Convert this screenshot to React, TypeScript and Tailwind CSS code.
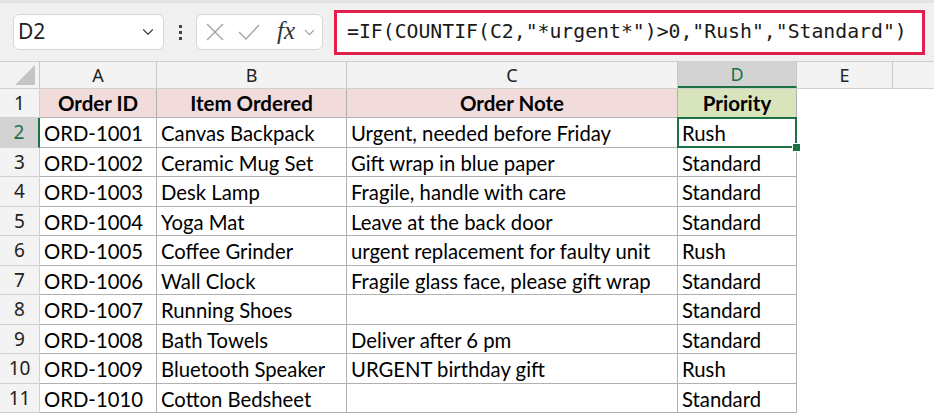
import { ChevronDown } from "lucide-react";

const colClasses = ["w-[117px]", "w-[190px]", "w-[331px]", "w-[119px]"];
const rowHeights = ["h-[29px]", "h-[30px]", "h-[29px]", "h-[30px]", "h-[29px]", "h-[30px]", "h-[29px]", "h-[30px]", "h-[29px]", "h-[30px]", "h-[29px]"];

const orders = [
  ["ORD-1001", "Canvas Backpack", "Urgent, needed before Friday", "Rush"],
  ["ORD-1002", "Ceramic Mug Set", "Gift wrap in blue paper", "Standard"],
  ["ORD-1003", "Desk Lamp", "Fragile, handle with care", "Standard"],
  ["ORD-1004", "Yoga Mat", "Leave at the back door", "Standard"],
  ["ORD-1005", "Coffee Grinder", "urgent replacement for faulty unit", "Rush"],
  ["ORD-1006", "Wall Clock", "Fragile glass face, please gift wrap", "Standard"],
  ["ORD-1007", "Running Shoes", "", "Standard"],
  ["ORD-1008", "Bath Towels", "Deliver after 6 pm", "Standard"],
  ["ORD-1009", "Bluetooth Speaker", "URGENT birthday gift", "Rush"],
  ["ORD-1010", "Cotton Bedsheet", "", "Standard"],
];

const FormulaBar = () => (
  <div className="h-[61px] bg-[#f0f0f0] border-t-[3px] border-[#e2e2e2] flex items-center">
    <div className="ml-[13px] w-[151px] h-[36px] bg-white border border-[#d6d6d6] rounded-[6px] flex items-center justify-between pl-[4px] pr-[6px]">
      <span className="text-[21px] text-[#222] font-['Noto_Sans',sans-serif]">D2</span>
      <ChevronDown className="w-[18px] h-[18px] text-[#444]" strokeWidth={1.6} />
    </div>
    <div className="w-[32px] flex flex-col items-center gap-[3px]">
      <span className="w-[3px] h-[3px] bg-[#444]" />
      <span className="w-[3px] h-[3px] bg-[#444]" />
      <span className="w-[3px] h-[3px] bg-[#444]" />
    </div>
    <div className="w-[127px] h-[36px] bg-white border border-[#d6d6d6] rounded-[6px] flex items-center pl-[8px]">
      <svg width="20" height="20" viewBox="0 0 20 20" className="shrink-0">
        <path d="M2 2 L18 18 M18 2 L2 18" stroke="#a6a6a6" strokeWidth="1.5" fill="none" />
      </svg>
      <svg width="24" height="20" viewBox="0 0 24 20" className="shrink-0 ml-[12px]">
        <path d="M2 10 L9 17 L22 3" stroke="#a6a6a6" strokeWidth="1.5" fill="none" />
      </svg>
      <span className="ml-[16px] text-[25px] italic text-[#333] font-['Liberation_Serif',serif] leading-none -mt-[4px]">fx</span>
      <ChevronDown className="w-[17px] h-[17px] text-[#999] ml-[6px] shrink-0" strokeWidth={1.5} />
    </div>
    <div className="ml-[11px] w-[591px] h-[45px] bg-white border-[3px] border-[#e0204b] flex items-center pl-[10px]">
      <span className="text-[19.8px] text-[#1a1a1a] font-['DejaVu_Sans_Mono',monospace] whitespace-nowrap">
        =IF(COUNTIF(C2,"*urgent*")&gt;0,"Rush","Standard")
      </span>
    </div>
  </div>
);

const ColumnHeaders = () => (
  <div className="flex h-[28px] bg-[#f3f3f3] border-t border-b border-[#d0d0d0] text-[18px] text-[#222] font-['Noto_Sans',sans-serif]">
    <div className="w-[40px] border-r border-[#c8c8c8] relative">
      <svg width="20" height="20" viewBox="0 0 20 20" className="absolute right-[4px] bottom-[3px]">
        <path d="M20 0 L20 20 L0 20 Z" fill="#c4c4c4" />
      </svg>
    </div>
    {["A", "B", "C"].map((c, i) => (
      <div key={c} className={`${colClasses[i]} border-r border-[#c8c8c8] flex items-center justify-center`}>
        {c}
      </div>
    ))}
    <div className="w-[119px] bg-[#d3d3d3] border-r border-[#c8c8c8] border-b-2 border-b-[#1e7145] flex items-center justify-center text-[#1e7145]">
      D
    </div>
    <div className="w-[96px] border-r border-[#c8c8c8] flex items-center justify-center">E</div>
    <div className="flex-1" />
  </div>
);

export default function App() {
  return (
    <div className="w-[934px] h-[416px] bg-white overflow-hidden font-['Lato',sans-serif]">
      <FormulaBar />
      <ColumnHeaders />
      <div className="flex flex-col">
        <div className={`flex ${rowHeights[0]}`}>
          <div className="w-[40px] bg-[#f3f3f3] border-r border-b border-[#d0d0d0] flex items-center justify-center text-[19px] text-[#222] font-['Noto_Sans',sans-serif]">
            1
          </div>
          {["Order ID", "Item Ordered", "Order Note"].map((h, i) => (
            <div key={h} className={`${colClasses[i]} bg-[#f2dcdb] border-r border-b border-[#b0b0b0] flex items-center justify-center pt-[1px] font-bold text-[20.5px] text-black`}>
              {h}
            </div>
          ))}
          <div className="w-[119px] bg-[#d8e4bc] border-r border-b border-[#b0b0b0] flex items-center justify-center pt-[1px] font-bold text-[20.5px] text-black">
            Priority
          </div>
        </div>
        {orders.map((row, r) => {
          const selected = r === 0;
          return (
            <div key={row[0]} className={`flex ${rowHeights[r + 1]}`}>
              <div
                className={`w-[40px] border-b border-[#d0d0d0] flex items-center justify-center text-[19px] font-['Noto_Sans',sans-serif] ${
                  selected
                    ? "bg-[#d3d3d3] text-[#1e7145] border-r-2 border-r-[#1e7145]"
                    : "bg-[#f3f3f3] text-[#222] border-r border-r-[#d0d0d0]"
                }`}
              >
                {r + 2}
              </div>
              {row.map((v, i) => (
                <div
                  key={i}
                  className={`${colClasses[i]} relative border-r border-b border-[#b0b0b0] flex items-center pl-[4px] pt-[2px] text-[20.3px] text-black whitespace-nowrap`}
                >
                  {v}
                  {selected && i === 3 && (
                    <div className="absolute z-10 -left-px -top-px -right-px -bottom-px border-2 border-[#1e7145]">
                      <span className="absolute -right-[6px] -bottom-[6px] w-[9px] h-[9px] bg-[#1e7145] border border-white" />
                    </div>
                  )}
                </div>
              ))}
            </div>
          );
        })}
      </div>
    </div>
  );
}
